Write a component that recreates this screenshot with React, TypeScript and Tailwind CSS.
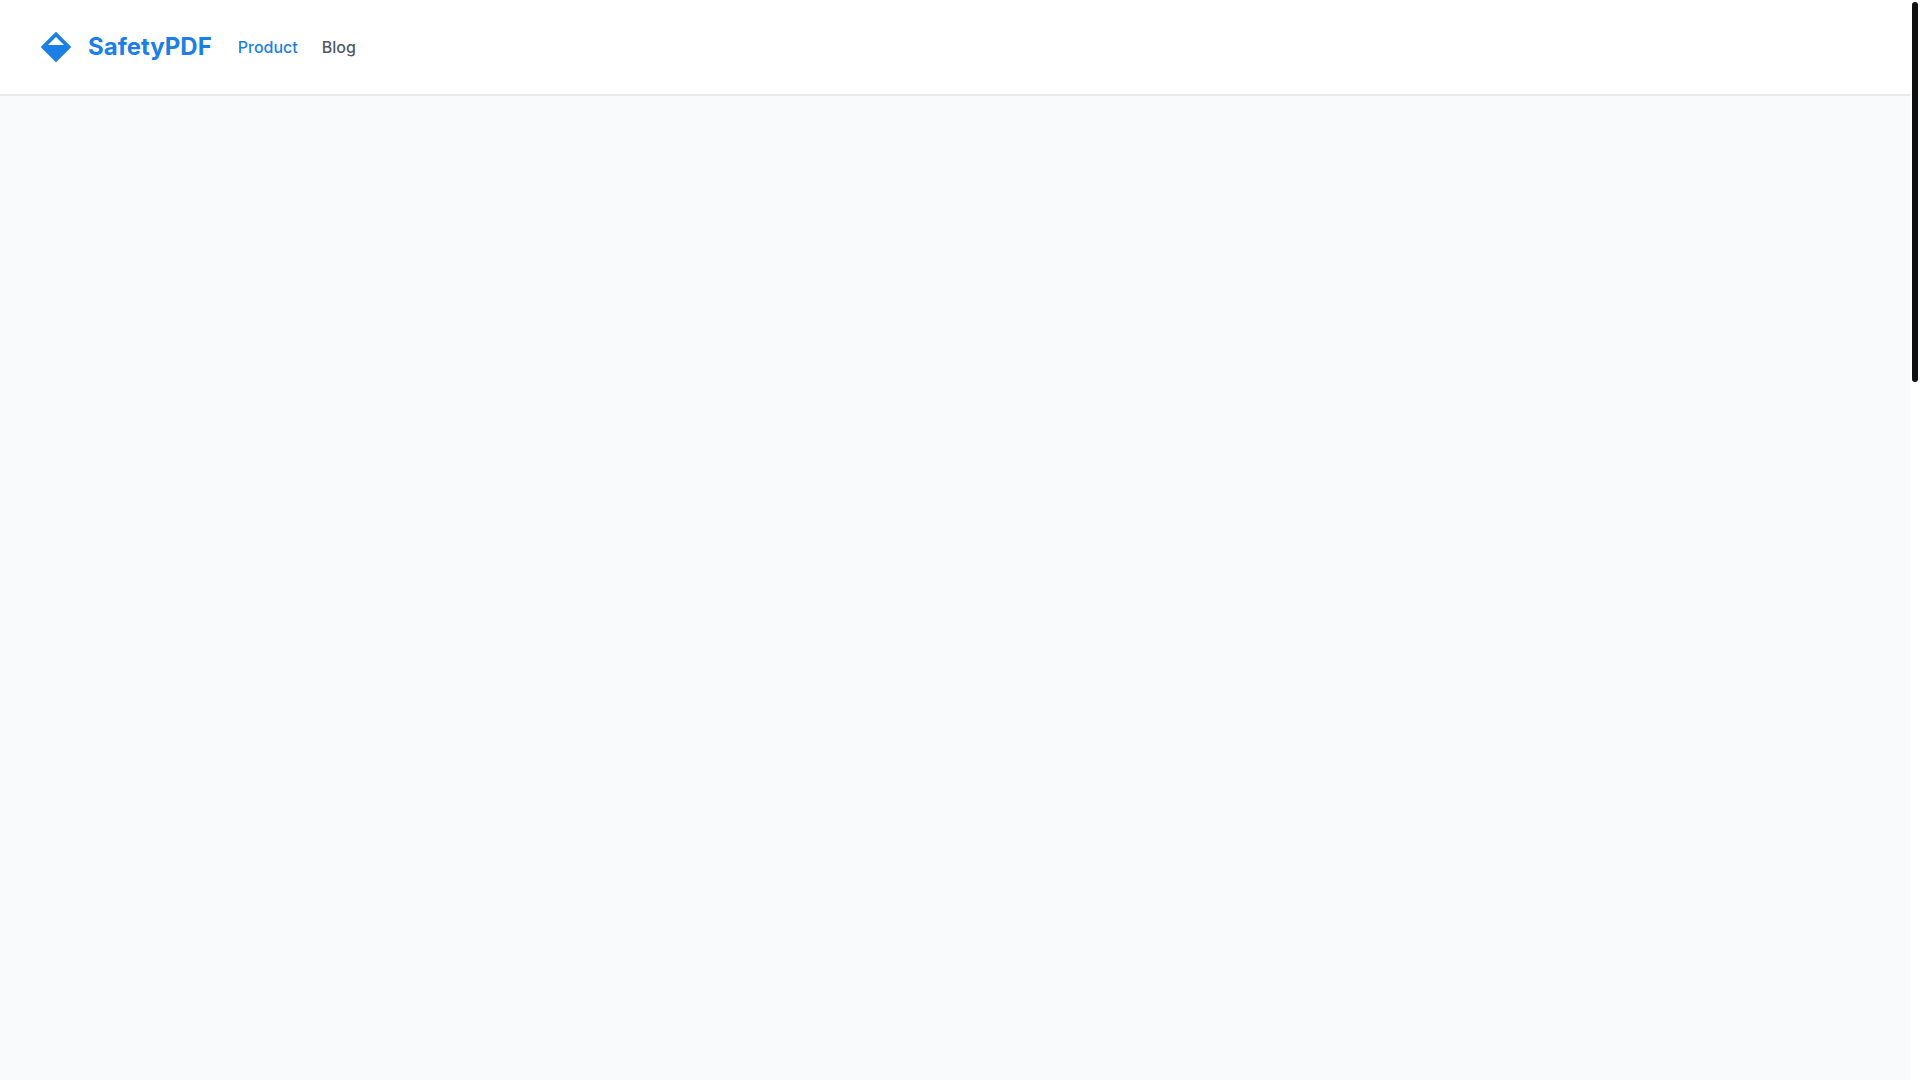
const links = [
  { label: 'Product', href: '#product', active: true },
  { label: 'Blog', href: '#blog', active: false },
]

function Logo() {
  return (
    <a href="#" className="flex items-center gap-4 text-[#1b7fe6]">
      <svg viewBox="0 0 32 32" className="size-8" fill="currentColor" aria-hidden="true">
        <path fillRule="evenodd" d="M16 .7 31.3 16 16 31.3.7 16ZM16 6 8 14h16Z" />
      </svg>
      <span className="text-2xl font-bold">SafetyPDF</span>
    </a>
  )
}

function Header() {
  return (
    <header className="flex h-24 items-center gap-[26px] border-b-2 border-[#e6ebf0] bg-white px-10">
      <Logo />
      <nav className="flex items-center gap-6">
        {links.map(link => (
          <a
            key={link.label}
            href={link.href}
            className={`text-base font-medium ${link.active ? 'text-[#1b7fe6]' : 'text-[#505965]'}`}
          >
            {link.label}
          </a>
        ))}
      </nav>
    </header>
  )
}

export default function App() {
  return (
    <div className="flex min-h-screen bg-white font-['Inter',sans-serif]">
      <div className="flex grow flex-col bg-[#f8fafc]">
        <Header />
        <main className="grow" />
      </div>
      {/* scroll track */}
      <div className="w-[10px] p-[2px]" aria-hidden="true">
        <div className="h-[380px] rounded-full bg-[#111111]" />
      </div>
    </div>
  )
}
